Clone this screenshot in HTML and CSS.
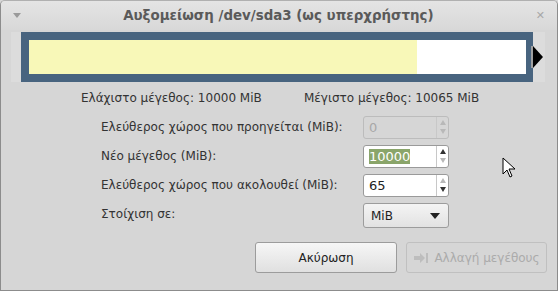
FILE: index.html
```html
<!DOCTYPE html>
<html lang="el">

<head>
    <meta charset="UTF-8">
    <title>Αυξομείωση /dev/sda3</title>
    <link rel="stylesheet" href="styles.css">
</head>

<body>
    <div class="window">
        <div class="titlebar">
            <span class="menu-arrow"></span>
            <span class="title">Αυξομείωση /dev/sda3 (ως υπερχρήστης)</span>
            <span class="close">&#x2715;</span>
        </div>

        <div class="content">
            <div class="partition-map">
                <div class="part-frame">
                    <div class="part-used"></div>
                    <div class="part-free"></div>
                </div>
                <div class="handle"></div>
            </div>

            <div class="sizes">
                <span class="size-min">Ελάχιστο μέγεθος: 10000 MiB</span>
                <span class="size-max">Μέγιστο μέγεθος: 10065 MiB</span>
            </div>

            <div class="form-grid">
                <label>Ελεύθερος χώρος που προηγείται (MiB):</label>
                <div class="spin disabled">
                    <span class="spin-value">0</span>
                    <span class="spin-arrows"><i class="up off"></i><i class="down off"></i></span>
                </div>

                <label>Νέο μέγεθος (MiB):</label>
                <div class="spin focused">
                    <span class="spin-value"><span class="selected">10000</span></span>
                    <span class="spin-arrows"><i class="up"></i><i class="down off"></i></span>
                </div>

                <label>Ελεύθερος χώρος που ακολουθεί (MiB):</label>
                <div class="spin">
                    <span class="spin-value">65</span>
                    <span class="spin-arrows"><i class="up off"></i><i class="down"></i></span>
                </div>

                <label>Στοίχιση σε:</label>
                <div class="combo">
                    <span>MiB</span>
                    <i class="combo-arrow"></i>
                </div>
            </div>

            <div class="buttons">
                <button class="btn">Ακύρωση</button>
                <button class="btn btn-disabled">
                    <svg class="btn-icon" width="16" height="12" viewBox="0 0 16 12">
                        <path d="M1 4h6V1l5 5-5 5V8H1z" fill="#bdbdbd"/>
                        <rect x="13" y="1" width="2" height="10" fill="#bdbdbd"/>
                    </svg>
                    Αλλαγή μεγέθους
                </button>
            </div>
        </div>

        <svg class="pointer" width="14" height="22" viewBox="0 0 14 22">
            <path d="M1 1v16l4-4 3 7 2-1-3-7h6z" fill="#fff" stroke="#000" stroke-width="1"/>
        </svg>
    </div>
</body>

</html>
```

FILE: styles.css
```css
body {
    margin: 0;
    padding: 0;
    background-color: #d6d6d6;
    font-family: "DejaVu Sans", sans-serif;
    font-size: 12px;
    color: #333;
}

.window {
    position: relative;
    width: 558px;
    height: 291px;
    box-sizing: border-box;
    background-color: #d6d6d6;
    border: 1px solid #8c8c8c;
    border-top-color: #b0b0b0;
    border-radius: 5px 5px 0 0;
    overflow: hidden;
}

.titlebar {
    display: flex;
    align-items: center;
    height: 29px;
    padding: 0 12px 0 12px;
    background: linear-gradient(#e4e4e4, #d8d8d8);
}

.menu-arrow {
    width: 0;
    height: 0;
    border-left: 4px solid transparent;
    border-right: 4px solid transparent;
    border-top: 5px solid #9a9a9a;
    margin-left: 0;
}

.title {
    flex: 1;
    text-align: center;
    font-weight: bold;
    font-size: 13.4px;
    color: #5a5a5a;
}

.close {
    font-size: 11px;
    font-weight: bold;
    color: #a8a8a8;
}

.content {
    padding: 2px 0 0 0;
}

/* Barra da partição */

.partition-map {
    display: flex;
    align-items: center;
    margin-left: 10px;
    width: 534px;
    height: 50px;
    background-color: #dcdcdc;
}

.part-frame {
    display: flex;
    box-sizing: border-box;
    width: 512px;
    height: 50px;
    margin-left: 10px;
    border: 8px solid #48647f;
    border-right-width: 7px;
}

.part-used {
    width: 388px;
    background-color: #f8f8b8;
}

.part-free {
    flex: 1;
    background-color: #fff;
}

.handle {
    width: 0;
    height: 0;
    border-top: 11px solid transparent;
    border-bottom: 11px solid transparent;
    border-left: 10px solid #000;
    box-shadow: -2px 0 0 #a0a0a0;
}

.sizes {
    display: flex;
    padding-left: 80px;
    margin-top: 9px;
    height: 14px;
    line-height: 14px;
}

.size-min {
    width: 223px;
}

.form-grid {
    display: grid;
    grid-template-columns: 262px 86px;
    grid-auto-rows: 22px;
    row-gap: 7px;
    align-items: center;
    padding-left: 100px;
    margin-top: 11px;
}

.spin {
    display: flex;
    box-sizing: border-box;
    height: 23px;
    background-color: #fff;
    border: 1px solid #9a9a9a;
    border-radius: 3px;
}

.spin-value {
    flex: 1;
    padding-left: 5px;
    line-height: 21px;
    font-size: 13px;
    color: #222;
}

.selected {
    background-color: #8aa56a;
    color: #fff;
}

.spin-arrows {
    display: flex;
    flex-direction: column;
    justify-content: center;
    align-items: center;
    gap: 4px;
    width: 11px;
    border-left: 1px solid #c8c8c8;
}

.spin-arrows i {
    width: 0;
    height: 0;
    border-left: 3px solid transparent;
    border-right: 3px solid transparent;
}

.spin-arrows .up {
    border-bottom: 5px solid #333;
}

.spin-arrows .down {
    border-top: 5px solid #333;
}

.spin-arrows .up.off {
    border-bottom-color: #b8b8b8;
}

.spin-arrows .down.off {
    border-top-color: #b8b8b8;
}

.spin.disabled {
    background-color: #d6d6d6;
    border-color: #bcbcbc;
}

.spin.disabled .spin-value {
    color: #a8a8a8;
}

.combo {
    display: flex;
    align-items: center;
    justify-content: space-between;
    box-sizing: border-box;
    height: 25px;
    margin-top: 3px;
    padding: 0 8px 0 7px;
    border: 1px solid #9c9c9c;
    border-radius: 3px;
    background: linear-gradient(#f4f4f4, #e2e2e2);
    color: #222;
}

.combo-arrow {
    width: 0;
    height: 0;
    border-left: 5px solid transparent;
    border-right: 5px solid transparent;
    border-top: 6px solid #222;
}

.buttons {
    display: flex;
    gap: 9px;
    padding-left: 254px;
    margin-top: 17px;
}

.btn {
    display: flex;
    align-items: center;
    justify-content: center;
    gap: 5px;
    width: 142px;
    height: 31px;
    border: 1px solid #9c9c9c;
    border-radius: 3px;
    background: linear-gradient(#f6f6f6, #e0e0e0);
    font-family: "DejaVu Sans", sans-serif;
    font-size: 12px;
    color: #222;
}

.btn-disabled {
    width: 141px;
    background: #d6d6d6;
    border-color: #c0c0c0;
    color: #ababab;
}

.pointer {
    position: absolute;
    left: 501px;
    top: 156px;
}
```
